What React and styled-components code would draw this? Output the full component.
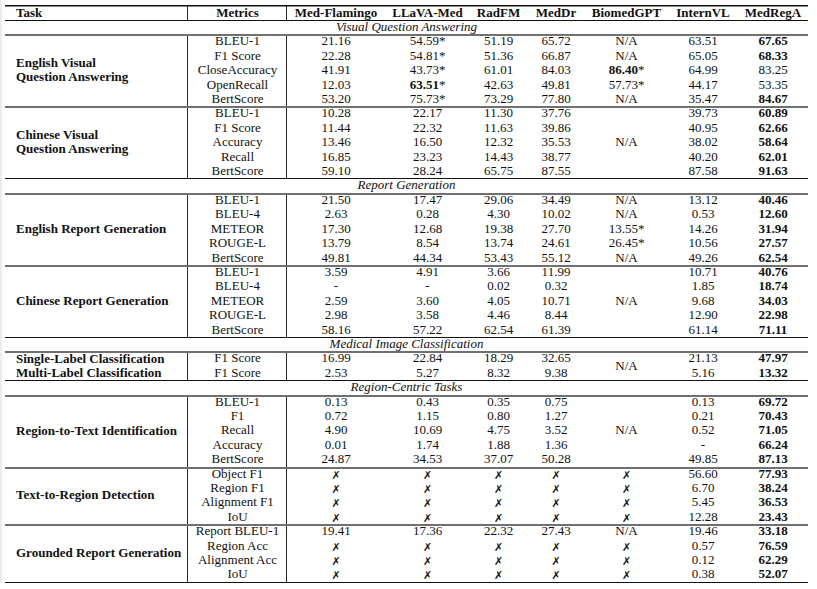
import React from "react";
import styled, { createGlobalStyle } from "styled-components";

const Global = createGlobalStyle`
  html, body { margin: 0; padding: 0; background: #fff; }
  body {
    background: linear-gradient(to right, #e4e4e4 0px, #f6f6f6 2px, #fff 4px);
    font-family: "Liberation Serif", "Times New Roman", serif;
    color: #111;
  }
`;

const LINES = {
  rule: "inset 0 1.5px 0 #111",
  black: "inset 0 1px 0 #111",
  gray: "inset 0 2px 0 #707070",
  none: "inset 0 0 0 transparent",
};

const Page = styled.div`
  padding: 5px 0 0 5px;
`;

const Table = styled.table`
  width: 803px;
  table-layout: fixed;
  border-collapse: separate;
  border-spacing: 0;
  font-size: 13px;
  border-bottom: 1px solid #111;
`;

const Row = styled.tr`
  --tl: ${(p) => LINES[p.$top || "none"]};
`;

const HeadCell = styled.th`
  height: 15px;
  padding: 0;
  padding-left: ${(p) => (p.$align === "left" ? "11px" : "0")};
  text-align: ${(p) => p.$align || "center"};
  font-weight: bold;
  line-height: 15px;
  white-space: nowrap;
  box-shadow: var(--tl)${(p) => (p.$divider ? ", inset -1px 0 0 #2a2a2a" : "")};
`;

const SectionCell = styled.td`
  height: 14.4px;
  padding: 0;
  line-height: 14.4px;
  text-align: center;
  font-style: italic;
  box-shadow: var(--tl);
`;

const TaskCell = styled.td`
  padding: 0 0 0 11px;
  text-align: left;
  vertical-align: middle;
  font-weight: bold;
  line-height: 14px;
  white-space: nowrap;
  box-shadow: var(--tl), inset -1px 0 0 #2a2a2a;
`;

const MetricCell = styled.td`
  height: 14.4px;
  padding: 0;
  text-align: center;
  line-height: 14.4px;
  white-space: nowrap;
  box-shadow: var(--tl), inset -1px 0 0 #2a2a2a;
`;

const ValueCell = styled.td`
  height: 14.4px;
  padding: 0;
  text-align: center;
  vertical-align: middle;
  line-height: 14.4px;
  white-space: nowrap;
  box-shadow: var(--tl);
`;

const Strong = styled.b`
  font-weight: bold;
`;

const Cross = styled.span`
  display: inline-block;
  height: 10px;
  line-height: 10px;
  vertical-align: -1px;
  font-family: "DejaVu Sans", sans-serif;
  font-size: 11px;
  font-weight: bold;
  overflow: visible;
`;

const COLS = [183, 99, 98, 85, 57, 58, 83, 70, 70];
const HEAD = ["Task", "Metrics", "Med-Flamingo", "LLaVA-Med", "RadFM", "MedDr", "BiomedGPT", "InternVL", "MedRegA"];

const X = "x";

const DATA = [
  {
    title: "Visual Question Answering",
    groups: [
      {
        task: ["English Visual", "Question Answering"],
        rows: [
          ["BLEU-1", "21.16", "54.59*", "51.19", "65.72", "N/A", "63.51", "**67.65"],
          ["F1 Score", "22.28", "54.81*", "51.36", "66.87", "N/A", "65.05", "**68.33"],
          ["CloseAccuracy", "41.91", "43.73*", "61.01", "84.03", "**86.40*", "64.99", "83.25"],
          ["OpenRecall", "12.03", "**63.51*", "42.63", "49.81", "57.73*", "44.17", "53.35"],
          ["BertScore", "53.20", "75.73*", "73.29", "77.80", "N/A", "35.47", "**84.67"],
        ],
      },
      {
        task: ["Chinese Visual", "Question Answering"],
        merged: "N/A",
        rows: [
          ["BLEU-1", "10.28", "22.17", "11.30", "37.76", null, "39.73", "**60.89"],
          ["F1 Score", "11.44", "22.32", "11.63", "39.86", null, "40.95", "**62.66"],
          ["Accuracy", "13.46", "16.50", "12.32", "35.53", null, "38.02", "**58.64"],
          ["Recall", "16.85", "23.23", "14.43", "38.77", null, "40.20", "**62.01"],
          ["BertScore", "59.10", "28.24", "65.75", "87.55", null, "87.58", "**91.63"],
        ],
      },
    ],
  },
  {
    title: "Report Generation",
    groups: [
      {
        task: ["English Report Generation"],
        rows: [
          ["BLEU-1", "21.50", "17.47", "29.06", "34.49", "N/A", "13.12", "**40.46"],
          ["BLEU-4", "2.63", "0.28", "4.30", "10.02", "N/A", "0.53", "**12.60"],
          ["METEOR", "17.30", "12.68", "19.38", "27.70", "13.55*", "14.26", "**31.94"],
          ["ROUGE-L", "13.79", "8.54", "13.74", "24.61", "26.45*", "10.56", "**27.57"],
          ["BertScore", "49.81", "44.34", "53.43", "55.12", "N/A", "49.26", "**62.54"],
        ],
      },
      {
        task: ["Chinese Report Generation"],
        merged: "N/A",
        rows: [
          ["BLEU-1", "3.59", "4.91", "3.66", "11.99", null, "10.71", "**40.76"],
          ["BLEU-4", "-", "-", "0.02", "0.32", null, "1.85", "**18.74"],
          ["METEOR", "2.59", "3.60", "4.05", "10.71", null, "9.68", "**34.03"],
          ["ROUGE-L", "2.98", "3.58", "4.46", "8.44", null, "12.90", "**22.98"],
          ["BertScore", "58.16", "57.22", "62.54", "61.39", null, "61.14", "**71.11"],
        ],
      },
    ],
  },
  {
    title: "Medical Image Classification",
    groups: [
      {
        rowTasks: ["Single-Label Classification", "Multi-Label Classification"],
        merged: "N/A",
        rows: [
          ["F1 Score", "16.99", "22.84", "18.29", "32.65", null, "21.13", "**47.97"],
          ["F1 Score", "2.53", "5.27", "8.32", "9.38", null, "5.16", "**13.32"],
        ],
      },
    ],
  },
  {
    title: "Region-Centric Tasks",
    groups: [
      {
        task: ["Region-to-Text Identification"],
        merged: "N/A",
        rows: [
          ["BLEU-1", "0.13", "0.43", "0.35", "0.75", null, "0.13", "**69.72"],
          ["F1", "0.72", "1.15", "0.80", "1.27", null, "0.21", "**70.43"],
          ["Recall", "4.90", "10.69", "4.75", "3.52", null, "0.52", "**71.05"],
          ["Accuracy", "0.01", "1.74", "1.88", "1.36", null, "-", "**66.24"],
          ["BertScore", "24.87", "34.53", "37.07", "50.28", null, "49.85", "**87.13"],
        ],
      },
      {
        task: ["Text-to-Region Detection"],
        rows: [
          ["Object F1", X, X, X, X, X, "56.60", "**77.93"],
          ["Region F1", X, X, X, X, X, "6.70", "**38.24"],
          ["Alignment F1", X, X, X, X, X, "5.45", "**36.53"],
          ["IoU", X, X, X, X, X, "12.28", "**23.43"],
        ],
      },
      {
        task: ["Grounded Report Generation"],
        rows: [
          ["Report BLEU-1", "19.41", "17.36", "22.32", "27.43", "N/A", "19.46", "**33.18"],
          ["Region Acc", X, X, X, X, X, "0.57", "**76.59"],
          ["Alignment Acc", X, X, X, X, X, "0.12", "**62.29"],
          ["IoU", X, X, X, X, X, "0.38", "**52.07"],
        ],
      },
    ],
  },
];

function Value({ v }) {
  if (v === X) return <Cross>✗</Cross>;
  if (v.startsWith("**")) {
    const s = v.slice(2);
    if (s.endsWith("*")) {
      return (
        <>
          <Strong>{s.slice(0, -1)}</Strong>*
        </>
      );
    }
    return <Strong>{s}</Strong>;
  }
  return v;
}

export default function App() {
  return (
    <Page>
      <Global />
      <Table>
        <colgroup>
          {COLS.map((w, i) => (
            <col key={i} style={{ width: w }} />
          ))}
        </colgroup>
        <thead>
          <Row $top="rule">
            {HEAD.map((h, i) => (
              <HeadCell key={h} $align={i === 0 ? "left" : "center"} $divider={i < 2}>
                {h}
              </HeadCell>
            ))}
          </Row>
        </thead>
        <tbody>
          {DATA.map((sec) => (
            <React.Fragment key={sec.title}>
              <Row $top="black">
                <SectionCell colSpan={9}>{sec.title}</SectionCell>
              </Row>
              {sec.groups.map((g, gi) =>
                g.rows.map((r, ri) => (
                  <Row key={`${sec.title}-${gi}-${ri}`} $top={ri === 0 ? "gray" : "none"}>
                    {g.rowTasks ? (
                      <TaskCell>{g.rowTasks[ri]}</TaskCell>
                    ) : (
                      ri === 0 && (
                        <TaskCell rowSpan={g.rows.length}>
                          {g.task.map((t, ti) => (
                            <React.Fragment key={t}>
                              {ti > 0 && <br />}
                              {t}
                            </React.Fragment>
                          ))}
                        </TaskCell>
                      )
                    )}
                    <MetricCell>{r[0]}</MetricCell>
                    {r.slice(1).map((v, vi) => {
                      if (v === null) {
                        return ri === 0 ? (
                          <ValueCell key={vi} rowSpan={g.rows.length}>
                            {g.merged}
                          </ValueCell>
                        ) : null;
                      }
                      return (
                        <ValueCell key={vi}>
                          <Value v={v} />
                        </ValueCell>
                      );
                    })}
                  </Row>
                ))
              )}
            </React.Fragment>
          ))}
        </tbody>
      </Table>
    </Page>
  );
}
